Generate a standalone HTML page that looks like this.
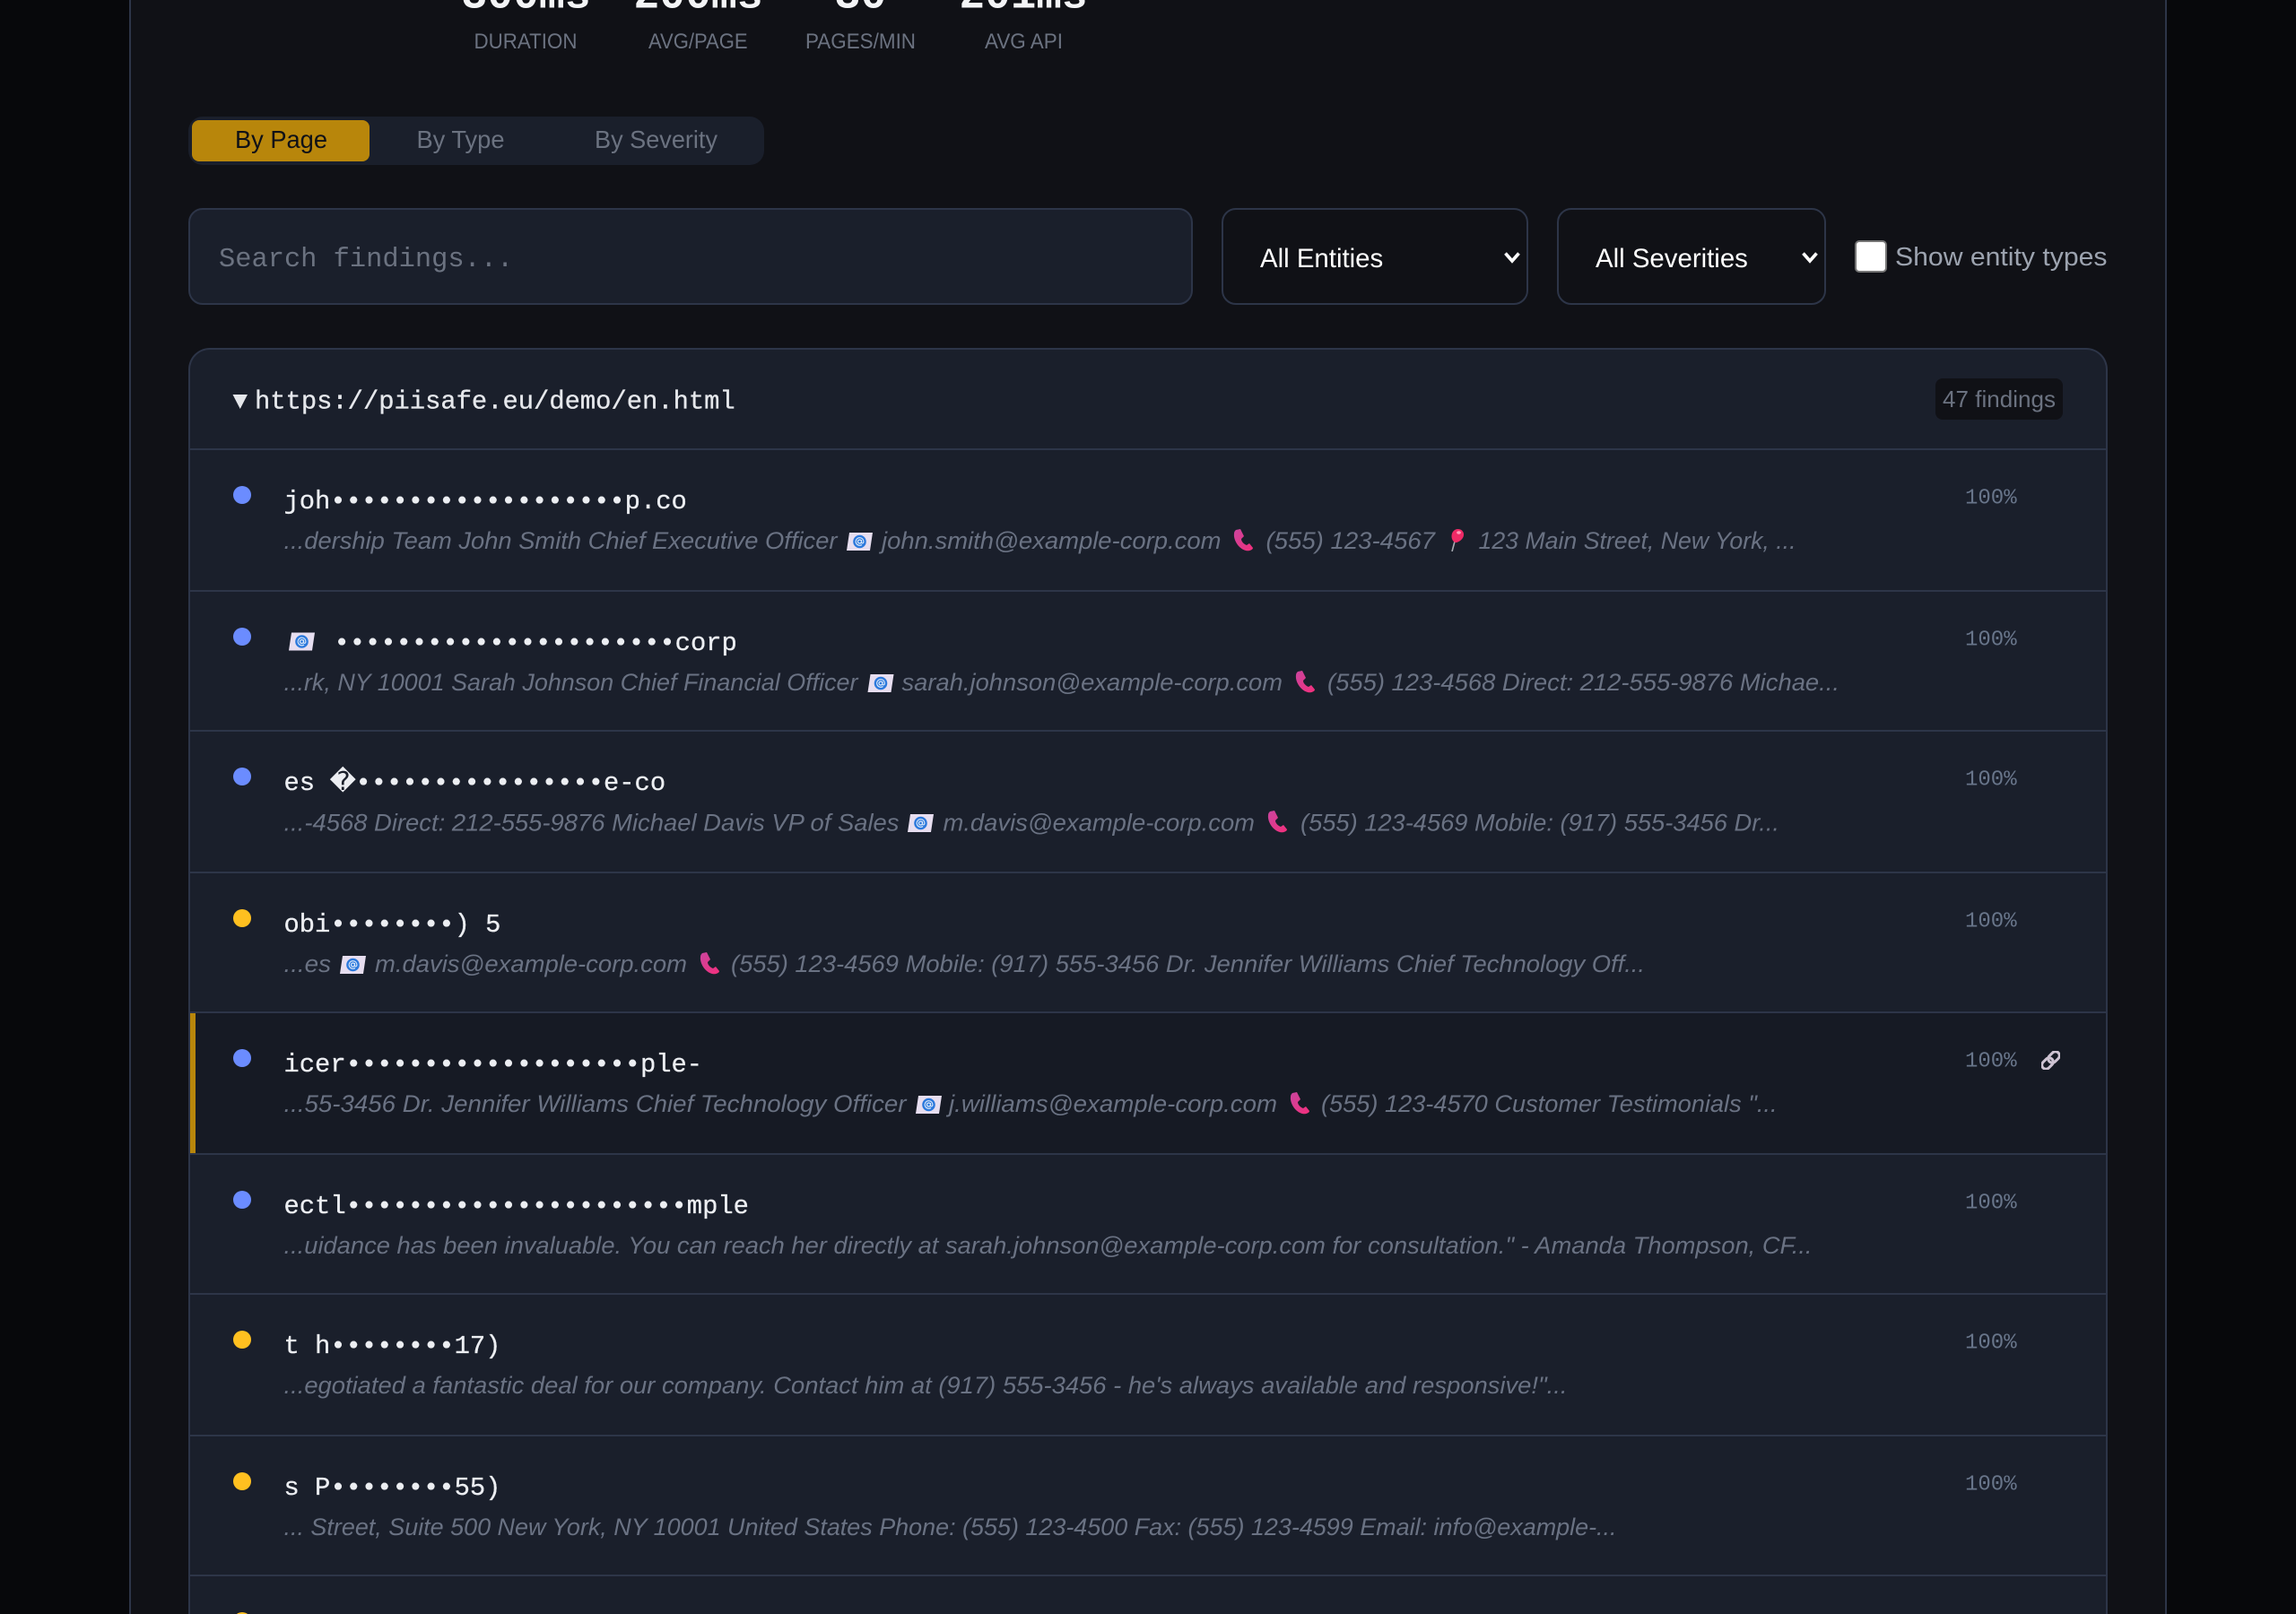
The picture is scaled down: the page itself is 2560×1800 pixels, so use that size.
<!DOCTYPE html>
<html lang="en">
<head>
<meta charset="utf-8">
<title>PII Scan Results</title>
<style>
html,body{margin:0;padding:0;width:2560px;height:1800px;overflow:hidden;background:#07080b;font-family:"Liberation Sans",sans-serif}
#page{position:absolute;left:0;top:0;width:2560px;height:1800px;overflow:hidden;contain:paint}
.abs{position:absolute;box-sizing:border-box}
#wrap{left:144px;top:0;width:2272px;height:1800px;background:#101116;border:2px solid #2d3548;border-top:0;border-bottom:0}
#tabs{left:210px;top:130px;width:642px;height:54px;background:#1a1f2b;border-radius:16px}
#tab1{left:214px;top:134px;width:198px;height:46px;background:#b8860b;border-radius:8px}
#search{left:210px;top:232px;width:1120px;height:108px;background:#1a1f2b;border:2px solid #2d3548;border-radius:16px;padding:7px 32px 0;font:30.4px "Liberation Mono",monospace;color:#e5e7eb;outline:none}
#search::placeholder{color:#6b7280;opacity:1}
select{appearance:none;-webkit-appearance:none;background:#101116;border:2px solid #2d3548;border-radius:16px;color:#fff;font:29.4px "Liberation Sans",sans-serif;padding:4px 0 0 41px;outline:none;top:232px;height:108px}
#s1{left:1362px;width:342px}
#s2{left:1736px;width:300px}
#cb{appearance:none;-webkit-appearance:none;left:2068px;top:268px;width:36px;height:36px;margin:0;background:#fff;border:2px solid #767676;border-radius:5px}
#card{left:210px;top:388px;width:2140px;height:1412px;background:#1a1f2b;border:2px solid #2d3548;border-bottom:0;border-radius:24px 24px 0 0}
#badge{left:2158px;top:422px;width:142px;height:46px;background:#101116;border-radius:8px}
.sep{left:212px;width:2136px;height:2px;background:#2d3548}
#active{left:212px;top:1130px;width:2136px;height:156px;background:#161a24;border-left:6px solid #b8860b}
.dot{left:260px;width:20px;height:20px;border-radius:50%}
.b{background:#6b8cff}.y{background:#ffc020}
svg{position:absolute;left:0;top:0}
text{white-space:pre}
.m{font:28.8px "Liberation Mono",monospace;fill:#eceef2;stroke:#eceef2;stroke-width:.3px}
.s{font:italic 27px "Liberation Sans",sans-serif;fill:#6a7283}
.p{font:24px "Liberation Mono",monospace;fill:#68758a}
.l{font:24px "Liberation Sans",sans-serif;fill:#6b7280}
.v{font:bold 48px "Liberation Mono",monospace;fill:#f3f4f6}
.t{font:28px "Liberation Sans",sans-serif;fill:#6b7280}
</style>
</head>
<body>
<div id="page">
<div class="abs" id="wrap"></div>
<div class="abs" id="tabs"></div>
<div class="abs" id="tab1"></div>
<input class="abs" id="search" type="text" placeholder="Search findings...">
<select class="abs" id="s1"><option>All Entities</option></select>
<select class="abs" id="s2"><option>All Severities</option></select>
<input class="abs" id="cb" type="checkbox">
<div class="abs" id="card"></div>
<div class="abs" id="badge"></div>
<div class="abs" id="active"></div>
<div class="abs sep" style="top:500px"></div>
<div class="abs sep" style="top:658px"></div>
<div class="abs sep" style="top:814px"></div>
<div class="abs sep" style="top:972px"></div>
<div class="abs sep" style="top:1128px"></div>
<div class="abs sep" style="top:1286px"></div>
<div class="abs sep" style="top:1442px"></div>
<div class="abs sep" style="top:1600px"></div>
<div class="abs sep" style="top:1756px"></div>
<div class="abs dot b" style="top:542px"></div>
<div class="abs dot b" style="top:700px"></div>
<div class="abs dot b" style="top:856px"></div>
<div class="abs dot y" style="top:1014px"></div>
<div class="abs dot b" style="top:1170px"></div>
<div class="abs dot b" style="top:1328px"></div>
<div class="abs dot y" style="top:1484px"></div>
<div class="abs dot y" style="top:1642px"></div>
<div class="abs dot y" style="top:1798px"></div>

<svg width="2560" height="1800" viewBox="0 0 2560 1800" xmlns="http://www.w3.org/2000/svg">
<defs>
<linearGradient id="pg" x1="0" y1="0" x2="1" y2="1"><stop offset="0" stop-color="#c9459e"/><stop offset="1" stop-color="#f42f7c"/></linearGradient>
<symbol id="mail" viewBox="0 0 29 20">
<polygon points="3,0 29,0 26,20 0,20" fill="#e7def0"/>
<circle cx="14.5" cy="10" r="7.3" fill="#2c79dc"/>
<circle cx="14.5" cy="10" r="2" fill="none" stroke="#dce9fa" stroke-width="1.2"/>
<path d="M16.5 8v3c0 1.400 2.400 1.200 2.400-1 0-2.600-2-4.300-4.400-4.300a4.300 4.300 0 1 0 2.500 7.800" fill="none" stroke="#dce9fa" stroke-width="1.100"/>
</symbol>
<symbol id="phone" viewBox="0 0 22 25">
<path d="M3 1L8 0L12 8L9 11C9 14 12 17 15 18L18 16L22 21C22 23 18 25 14 24C6 22 0 12 1 5C1 3 2 2 3 1Z" fill="url(#pg)"/>
</symbol>
<symbol id="pin" viewBox="0 0 18 25">
<path d="M8 12L4.500 25" stroke="#a8abb2" stroke-width="1.600" fill="none"/>
<path d="M11 0C15 0 18 3 17.500 7C17 11 13 14 9.500 15C6.500 15.500 4 12 4 8C4 3.500 7 0 11 0Z" fill="#ee2a66"/>
<ellipse cx="12" cy="4" rx="2.400" ry="1.700" fill="#ff9bb8"/>
</symbol>
<symbol id="link" viewBox="0 0 21 21">
<g fill="none" stroke="#cec3d2" stroke-width="3" transform="rotate(-45 10.500 10.500)">
<rect x="-1.500" y="6" width="14" height="9" rx="4.500"/>
<rect x="8.500" y="6" width="14" height="9" rx="4.500"/>
</g>
</symbol>
</defs>

<!-- stats -->
<text class="v" x="514.500" y="8.500" textLength="144" lengthAdjust="spacingAndGlyphs">300ms</text>
<text class="v" x="706.500" y="8.500" textLength="144" lengthAdjust="spacingAndGlyphs">200ms</text>
<text class="v" x="930.500" y="8.500" textLength="58" lengthAdjust="spacingAndGlyphs">30</text>
<text class="v" x="1069.500" y="8.500" textLength="143" lengthAdjust="spacingAndGlyphs">201ms</text>
<text class="l" x="528.500" y="54" textLength="115" lengthAdjust="spacingAndGlyphs">DURATION</text>
<text class="l" x="723" y="54" textLength="110.500" lengthAdjust="spacingAndGlyphs">AVG/PAGE</text>
<text class="l" x="898" y="54" textLength="123" lengthAdjust="spacingAndGlyphs">PAGES/MIN</text>
<text class="l" x="1098" y="54" textLength="87" lengthAdjust="spacingAndGlyphs">AVG API</text>

<!-- tabs -->
<text class="t" style="fill:#0f1117" x="262" y="165" textLength="103" lengthAdjust="spacingAndGlyphs">By Page</text>
<text class="t" x="464.500" y="165" textLength="98" lengthAdjust="spacingAndGlyphs">By Type</text>
<text class="t" x="663" y="165" textLength="137" lengthAdjust="spacingAndGlyphs">By Severity</text>

<!-- select chevrons -->
<path d="M1678.500 282.500L1686 291L1693.500 282.500" fill="none" stroke="#fff" stroke-width="3.600"/>
<path d="M2010.500 282.500L2018 291L2025.500 282.500" fill="none" stroke="#fff" stroke-width="3.600"/>
<text style="font:28.800px 'Liberation Sans',sans-serif;fill:#9ca3af" x="2113" y="296" textLength="236.500" lengthAdjust="spacingAndGlyphs">Show entity types</text>

<!-- card header -->
<polygon points="259.500,440 276,440 267.750,456" fill="#e5e7eb"/>
<text class="m" style="fill:#e5e7eb" x="284" y="455.500">https://piisafe.eu/demo/en.html</text>
<text style="font:25.600px 'Liberation Sans',sans-serif;fill:#6b7280" x="2166" y="454" textLength="126" lengthAdjust="spacingAndGlyphs">47 findings</text>

<!-- row 1 -->
<text class="m" x="316.500" y="567">joh•••••••••••••••••••p.co</text>
<text class="s" x="316.500" y="612" textLength="617" lengthAdjust="spacingAndGlyphs">...dership Team John Smith Chief Executive Officer</text>
<use href="#mail" x="944" y="594" width="29" height="20"/>
<text class="s" x="983" y="612" textLength="378.500" lengthAdjust="spacingAndGlyphs">john.smith@example-corp.com</text>
<use href="#phone" x="1375" y="590" width="22" height="25"/>
<text class="s" x="1411.500" y="612" textLength="188.500" lengthAdjust="spacingAndGlyphs">(555) 123-4567</text>
<use href="#pin" x="1614.500" y="590" width="18" height="25"/>
<text class="s" x="1648.500" y="612" textLength="354" lengthAdjust="spacingAndGlyphs">123 Main Street, New York, ...</text>
<text class="p" x="2191" y="561.500">100%</text>

<!-- row 2 -->
<use href="#mail" x="322" y="705" width="29" height="21"/>
<text class="m" x="372.500" y="725">••••••••••••••••••••••corp</text>
<text class="s" x="316.500" y="770" textLength="640" lengthAdjust="spacingAndGlyphs">...rk, NY 10001 Sarah Johnson Chief Financial Officer</text>
<use href="#mail" x="967.500" y="752" width="29" height="20"/>
<text class="s" x="1005.500" y="770" textLength="424.500" lengthAdjust="spacingAndGlyphs">sarah.johnson@example-corp.com</text>
<use href="#phone" x="1444" y="748" width="22" height="25"/>
<text class="s" x="1480" y="770" textLength="571" lengthAdjust="spacingAndGlyphs">(555) 123-4568 Direct: 212-555-9876 Michae...</text>
<text class="p" x="2191" y="719.500">100%</text>

<!-- row 3 -->
<text class="m" x="316.500" y="881">es </text>
<text style="font:28.800px 'DejaVu Sans',sans-serif;fill:#eceef2" x="367.500" y="881">&#xFFFD;</text>
<text class="m" x="396.500" y="881">••••••••••••••••e-co</text>
<text class="s" x="316.500" y="926.500" textLength="686" lengthAdjust="spacingAndGlyphs">...-4568 Direct: 212-555-9876 Michael Davis VP of Sales</text>
<use href="#mail" x="1012" y="908" width="29" height="20"/>
<text class="s" x="1051.500" y="926.500" textLength="347.500" lengthAdjust="spacingAndGlyphs">m.davis@example-corp.com</text>
<use href="#phone" x="1413" y="904" width="22" height="25"/>
<text class="s" x="1450" y="926.500" textLength="534" lengthAdjust="spacingAndGlyphs">(555) 123-4569 Mobile: (917) 555-3456 Dr...</text>
<text class="p" x="2191" y="875.500">100%</text>

<!-- row 4 -->
<text class="m" x="316.500" y="1039">obi••••••••) 5</text>
<text class="s" x="316.500" y="1084" textLength="52.500" lengthAdjust="spacingAndGlyphs">...es</text>
<use href="#mail" x="379" y="1066" width="29" height="20"/>
<text class="s" x="418" y="1084" textLength="348" lengthAdjust="spacingAndGlyphs">m.davis@example-corp.com</text>
<use href="#phone" x="780" y="1062" width="22" height="25"/>
<text class="s" x="815" y="1084" textLength="1019" lengthAdjust="spacingAndGlyphs">(555) 123-4569 Mobile: (917) 555-3456 Dr. Jennifer Williams Chief Technology Off...</text>
<text class="p" x="2191" y="1033.500">100%</text>

<!-- row 5 -->
<text class="m" x="316.500" y="1195">icer•••••••••••••••••••ple-</text>
<text class="s" x="316.500" y="1240" textLength="694" lengthAdjust="spacingAndGlyphs">...55-3456 Dr. Jennifer Williams Chief Technology Officer</text>
<use href="#mail" x="1021" y="1222" width="29" height="20"/>
<text class="s" x="1058" y="1240" textLength="366" lengthAdjust="spacingAndGlyphs">j.williams@example-corp.com</text>
<use href="#phone" x="1438" y="1218" width="22" height="25"/>
<text class="s" x="1473" y="1240" textLength="508.500" lengthAdjust="spacingAndGlyphs">(555) 123-4570 Customer Testimonials "...</text>
<text class="p" x="2191" y="1189.500">100%</text>
<use href="#link" x="2276" y="1172" width="21" height="21"/>

<!-- row 6 -->
<text class="m" x="316.500" y="1353">ectl••••••••••••••••••••••mple</text>
<text class="s" x="316.500" y="1398" textLength="1704" lengthAdjust="spacingAndGlyphs">...uidance has been invaluable. You can reach her directly at sarah.johnson@example-corp.com for consultation." - Amanda Thompson, CF...</text>
<text class="p" x="2191" y="1347.500">100%</text>

<!-- row 7 -->
<text class="m" x="316.500" y="1509">t h••••••••17)</text>
<text class="s" x="316.500" y="1554" textLength="1431" lengthAdjust="spacingAndGlyphs">...egotiated a fantastic deal for our company. Contact him at (917) 555-3456 - he's always available and responsive!"...</text>
<text class="p" x="2191" y="1503.500">100%</text>

<!-- row 8 -->
<text class="m" x="316.500" y="1667">s P••••••••55)</text>
<text class="s" x="316.500" y="1712" textLength="1486" lengthAdjust="spacingAndGlyphs">... Street, Suite 500 New York, NY 10001 United States Phone: (555) 123-4500 Fax: (555) 123-4599 Email: info@example-...</text>
<text class="p" x="2191" y="1661.500">100%</text>
</svg>
</div>
</body>
</html>
